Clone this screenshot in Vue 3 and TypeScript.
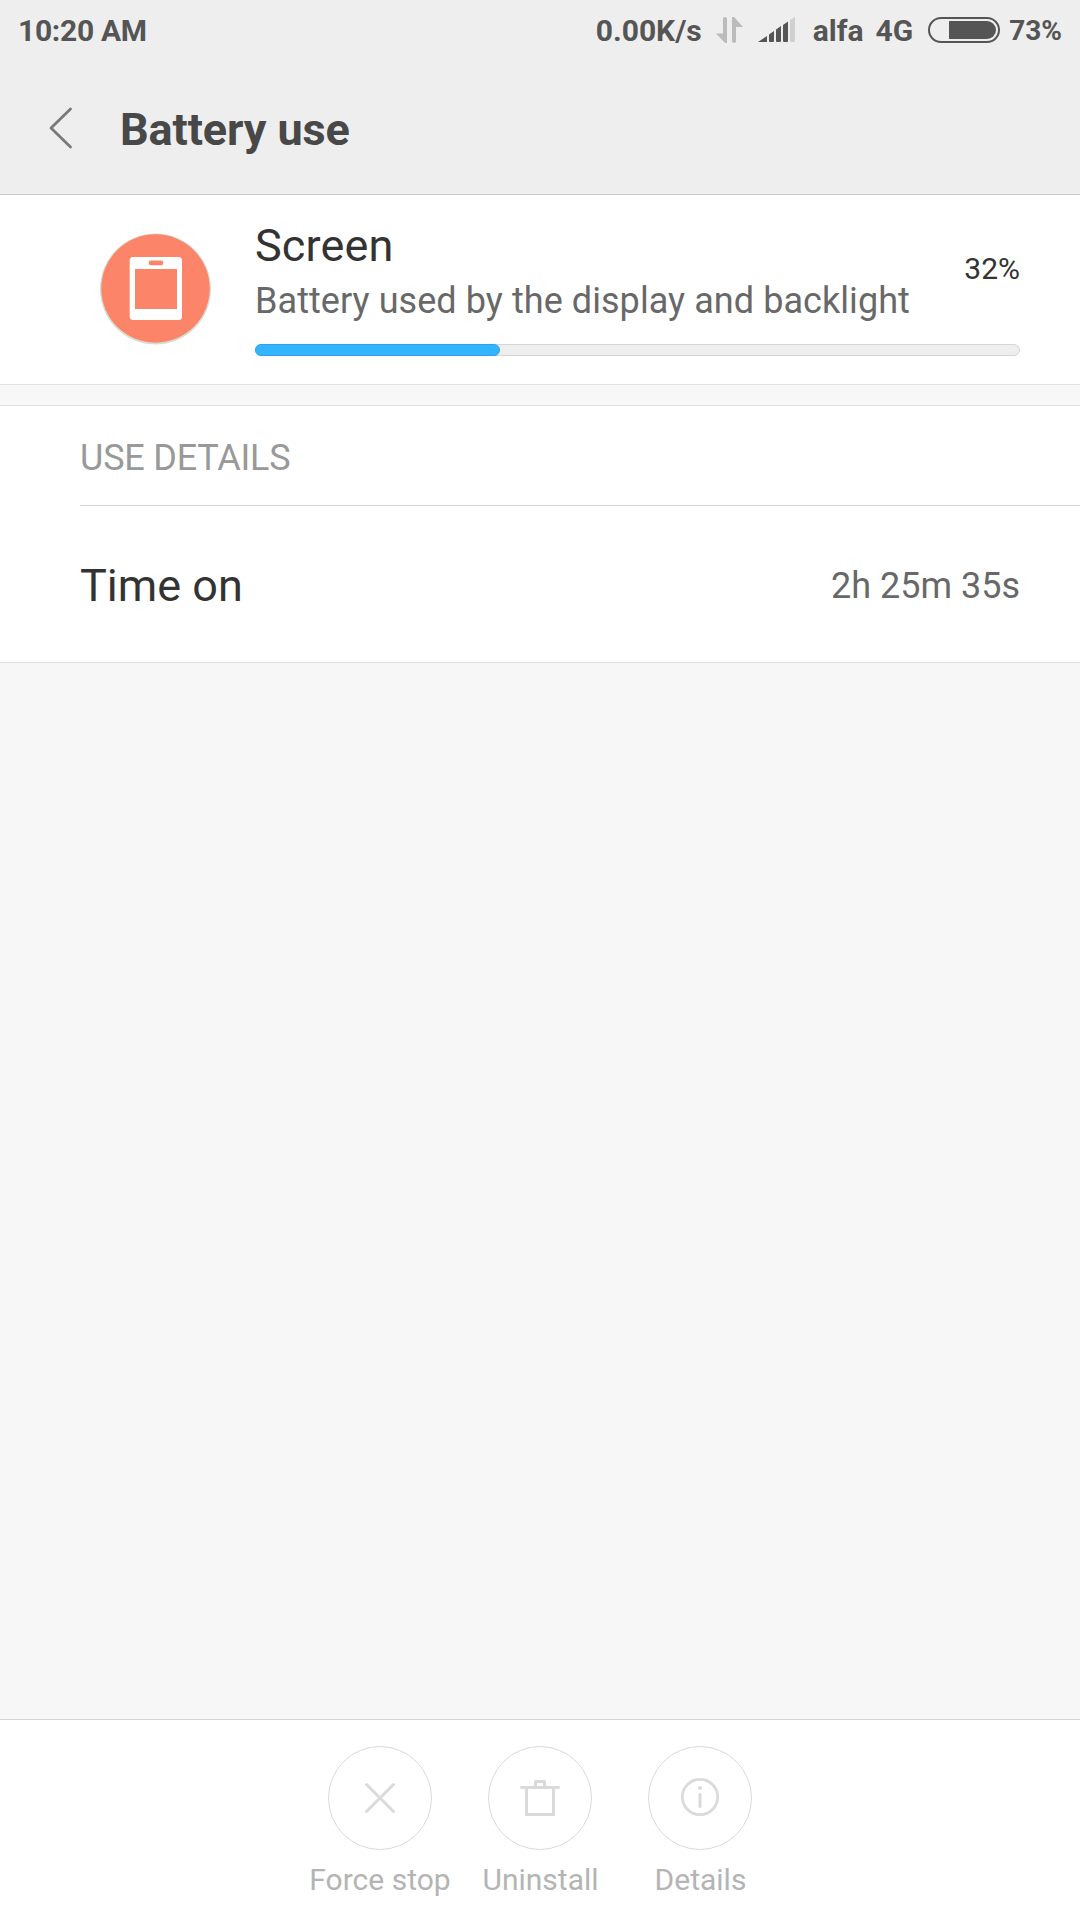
<script setup lang="ts">
interface Detail {
  label: string
  value: string
}

interface Action {
  id: 'stop' | 'uninstall' | 'details'
  label: string
}

const usage = {
  name: 'Screen',
  summary: 'Battery used by the display and backlight',
  percent: 32.1,
}

const details: Detail[] = [{ label: 'Time on', value: '2h 25m 35s' }]

const actions: Action[] = [
  { id: 'stop', label: 'Force stop' },
  { id: 'uninstall', label: 'Uninstall' },
  { id: 'details', label: 'Details' },
]
</script>

<template>
  <div class="screen">
    <header class="top">
      <div class="status">
        <span class="clock">10:20 AM</span>
        <span class="speed">0.00K/s</span>
        <svg class="arrows" width="28" height="26" viewBox="0 0 28 26">
          <path d="M7 2a2 2 0 0 1 4 0V26H9L0 16.500H7Z" fill="#bbb" />
          <path d="M20 24a2 2 0 0 1-4 0V0H18L27 10H20Z" fill="#bbb" />
        </svg>
        <svg class="signal" width="38" height="26" viewBox="0 0 38 26">
          <path d="M0 25 9 19V25Z M11 17.500 16 14V24a1 1 0 0 1-1 1H12a1 1 0 0 1-1-1Z M18 12.500 23 9V24a1 1 0 0 1-1 1H19a1 1 0 0 1-1-1Z M25 8 30 4.500V24a1 1 0 0 1-1 1H26a1 1 0 0 1-1-1Z" fill="#555" />
          <path d="M32 3 37 0V24a1 1 0 0 1-1 1H33a1 1 0 0 1-1-1Z" fill="#d0d0d0" />
        </svg>
        <span class="carrier">alfa</span>
        <span class="network">4G</span>
        <svg class="battery" width="72" height="26" viewBox="0 0 72 26">
          <rect x="1" y="1" width="70" height="24" rx="12" fill="none" stroke="#555" stroke-width="2" />
          <path d="M21 4H59a9 9 0 0 1 0 18H21Z" fill="#555" />
        </svg>
        <span class="level">73%</span>
      </div>
      <div class="toolbar">
        <svg class="back" width="24" height="42" viewBox="0 0 24 42">
          <path d="M21.500 2 2 21 21.500 40" fill="none" stroke="#7a7a7a" stroke-width="2.800" stroke-linecap="round" stroke-linejoin="round" />
        </svg>
        <h1 class="title">Battery use</h1>
      </div>
    </header>

    <section class="usage">
      <svg class="app-icon" width="111" height="112" viewBox="0 0 111 112">
        <circle cx="55.500" cy="56" r="55.500" fill="#d6ddd0" />
        <circle cx="55.500" cy="55.500" r="54.200" fill="#fc8468" />
        <rect x="29.700" y="24" width="52.300" height="63" rx="3.500" fill="#fff" />
        <rect x="48.700" y="27.500" width="14.600" height="4.700" rx="2.300" fill="#fc8468" />
        <rect x="35" y="36" width="42" height="40" fill="#fc8468" />
      </svg>
      <div class="usage-body">
        <div class="usage-head">
          <div>
            <div class="name">{{ usage.name }}</div>
            <div class="summary">{{ usage.summary }}</div>
          </div>
          <span class="percent">{{ Math.round(usage.percent) }}%</span>
        </div>
        <div class="track">
          <div class="fill" :style="{ width: usage.percent + '%' }"></div>
        </div>
      </div>
    </section>

    <section class="details">
      <h2 class="section-title">USE DETAILS</h2>
      <div v-for="row in details" :key="row.label" class="row">
        <span class="row-label">{{ row.label }}</span>
        <span class="row-value">{{ row.value }}</span>
      </div>
    </section>

    <footer class="actions">
      <div v-for="action in actions" :key="action.id" class="action">
        <span class="ring">
          <svg width="102" height="102" viewBox="1 1 102 102" fill="none" stroke="#dadada" stroke-width="3" stroke-linecap="round">
            <path v-if="action.id === 'stop'" d="M38.500 38.500 65.500 65.500M65.500 38.500 38.500 65.500" />
            <g v-else-if="action.id === 'uninstall'">
              <path d="M33.500 41.500H70.500M47.500 41V35.500H56.500V41" stroke-linejoin="round" />
              <path d="M38.500 42V68.500H65.500V42" />
            </g>
            <g v-else>
              <circle cx="52" cy="51" r="17.700" stroke-width="2.700" />
              <path d="M52 48.500V60.500" />
              <circle cx="52" cy="42" r="2" fill="#dadada" stroke="none" />
            </g>
          </svg>
        </span>
        <span class="action-label">{{ action.label }}</span>
      </div>
    </footer>
  </div>
</template>

<style>
body {
  background: #f7f7f7;
}
</style>

<style scoped>
.screen {
  display: flex;
  flex-direction: column;
  width: 1080px;
  height: 1920px;
  box-sizing: border-box;
  overflow: hidden;
  background: #f7f7f7;
  font-family: Roboto, "Liberation Sans", sans-serif;
  white-space: nowrap;
}

.top {
  height: 194px;
  background: #eee;
  border-bottom: 1px solid #c8c8c8;
}

.status {
  display: flex;
  align-items: center;
  height: 62px;
  padding: 0 18px 0 18px;
  color: #555;
  font-size: 30px;
  font-weight: 700;
  line-height: 62px;
}

.status svg {
  flex: none;
  margin-top: -2px;
}

.clock {
  letter-spacing: -0.3px;
}

.speed {
  margin-left: auto;
}

.arrows {
  margin-left: 14px;
}

.signal {
  margin-left: 14px;
}

.carrier {
  margin-left: 17px;
}

.network {
  margin-left: 12px;
}

.battery {
  margin-left: 15px;
}

.level {
  margin-left: 9px;
  font-size: 28px;
}

.toolbar {
  display: flex;
  align-items: center;
  height: 133px;
  padding-left: 49px;
}

.back {
  margin-top: -2px;
}

.title {
  margin: 2px 0 0 47px;
  color: #484848;
  font-size: 45px;
  font-weight: 700;
  line-height: 60px;
  letter-spacing: -0.1px;
}

.usage {
  display: flex;
  height: 189px;
  padding: 0 60px 0 100px;
  background: #fff;
  border-bottom: 1px solid #e0e0e0;
}

.app-icon {
  flex: none;
  margin-top: 38px;
}

.usage-body {
  flex: 1;
  margin-left: 44px;
  padding-top: 24px;
}

.usage-head {
  display: flex;
  align-items: center;
  justify-content: space-between;
  height: 104px;
}

.name {
  color: #333;
  font-size: 45px;
  line-height: 53px;
  letter-spacing: 0.15px;
}

.summary {
  margin-top: 7px;
  color: #686868;
  font-size: 36px;
  line-height: 44px;
  letter-spacing: 0.065px;
}

.percent {
  padding-bottom: 6px;
  color: #333;
  font-size: 30px;
}

.track {
  height: 10px;
  margin-top: 21px;
  border: 1px solid #d5d5d5;
  border-radius: 6px;
  background: #eee;
}

.fill {
  box-sizing: border-box;
  height: 12px;
  margin: -1px;
  border: 1px solid #2ea2ea;
  border-radius: 6px;
  background: #33b4ff;
}

.details {
  margin-top: 20px;
  padding-left: 80px;
  background: #fff;
  border-top: 1px solid #e0e0e0;
  border-bottom: 1px solid #e0e0e0;
}

.section-title {
  height: 99px;
  margin: 0;
  border-bottom: 1px solid #d5d5d5;
  color: #999;
  font-size: 36px;
  font-weight: 400;
  line-height: 105px;
  letter-spacing: -0.2px;
}

.row {
  display: flex;
  align-items: center;
  justify-content: space-between;
  height: 156px;
  padding-right: 60px;
}

.row-label {
  padding-top: 3px;
  color: #333;
  font-size: 45px;
}

.row-value {
  padding-top: 3px;
  color: #686868;
  font-size: 36px;
}

.actions {
  display: flex;
  justify-content: center;
  height: 200px;
  margin-top: auto;
  background: #fff;
  border-top: 1px solid #d5d5d5;
}

.action {
  display: flex;
  flex-direction: column;
  align-items: center;
  width: 160px;
  padding-top: 26px;
}

.ring {
  width: 102px;
  height: 102px;
  border: 1px solid #dadada;
  border-radius: 50%;
}

.ring svg {
  display: block;
}

.action-label {
  margin-top: 10px;
  color: #b4b4b4;
  font-size: 30px;
  line-height: 40px;
}

.action + .action .action-label {
  padding-left: 1px;
}
</style>
